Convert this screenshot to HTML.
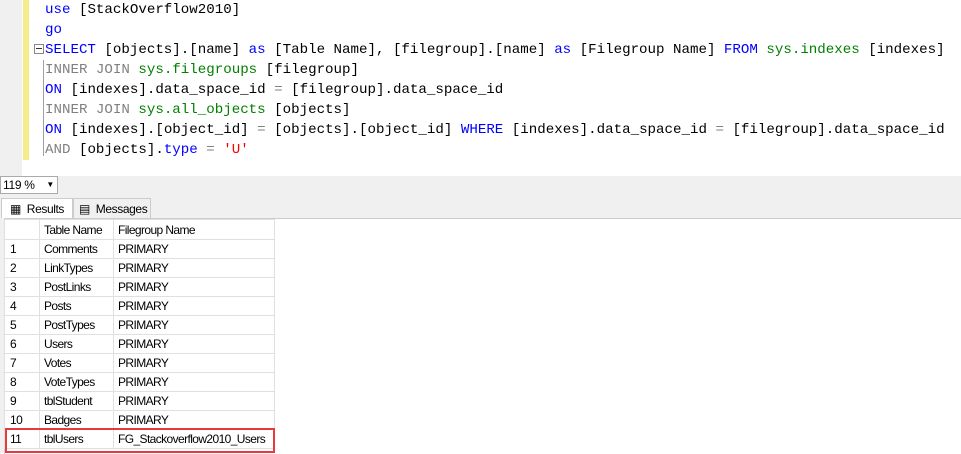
<html><head><style>
body{margin:0;width:961px;height:453px;position:relative;background:#fff;overflow:hidden;font-family:"Liberation Sans",sans-serif}
.ed{position:absolute;left:0;top:0;width:961px;height:176px;background:#fff}
.gut{position:absolute;left:0;top:0;width:22px;height:176px;background:#f0f0f0}
.yb{position:absolute;left:23px;top:0;width:6px;height:160px;background:#f5ec8a}
.code{position:absolute;left:45px;top:0;font:14.15px/20px "Liberation Mono",monospace;color:#000;white-space:pre}
.k{color:#0000ff}.g{color:#808080}.s{color:#008000}.r{color:#ff0000}
.ln{position:absolute;left:43px;top:60px;width:1px;height:96px;background:#a0a0a0}
.box{position:absolute;left:34px;top:44px;width:8px;height:8px;border:1px solid #888;background:#fff}
.box:after{content:"";position:absolute;left:1px;top:3px;width:6px;height:1px;background:#333}
.zoomb{position:absolute;left:0;top:176px;width:961px;height:19px;background:#f0f0f0}
.zsel{position:absolute;left:0;top:176px;width:58px;height:18px;background:#fff;border:1px solid #aaa;box-sizing:border-box;font-size:12px;line-height:16px;padding-left:2px;letter-spacing:-0.3px}
.res{position:absolute;left:0;top:195px;width:961px;height:258px;background:#f0f0f0}
.tab{position:absolute;top:198px;height:20px;font-size:12px;line-height:20px;box-sizing:border-box;border:1px solid #ccc;border-bottom:none;white-space:nowrap;letter-spacing:-0.4px}
.grid{position:absolute;left:4px;top:218px;width:957px;height:235px;background:#fff;border-left:1px solid #ccc;border-top:1px solid #ccc}
table{position:absolute;left:4px;top:219px;border-collapse:collapse;font-size:12px;letter-spacing:-0.6px;table-layout:fixed;width:269px}
tr{height:19px}
td{height:19px;border:1px solid #e0e0e0;padding:0 0 0 4px;white-space:nowrap;overflow:hidden}
td:nth-child(1){width:29px;padding-left:5px}td:nth-child(2){width:69px}td:nth-child(3){width:156px}
tr.h,tr.h td{height:20px}
.red{position:absolute;left:5px;top:428px;width:266px;height:21px;border:2px solid #e8393d}
</style></head><body>
<div class="ed"><div class="gut"></div><div class="yb"></div><div class="box"></div><div class="ln"></div>
<div class="code"><span class="k">use</span> [StackOverflow2010]
<span class="k">go</span>
<span class="k">SELECT</span> [objects].[name] <span class="k">as</span> [Table Name], [filegroup].[name] <span class="k">as</span> [Filegroup Name] <span class="k">FROM</span> <span class="s">sys.indexes</span> [indexes]
<span class="g">INNER JOIN</span> <span class="s">sys.filegroups</span> [filegroup]
<span class="k">ON</span> [indexes].data_space_id <span class="g">=</span> [filegroup].data_space_id
<span class="g">INNER JOIN</span> <span class="s">sys.all_objects</span> [objects]
<span class="k">ON</span> [indexes].[object_id] <span class="g">=</span> [objects].[object_id] <span class="k">WHERE</span> [indexes].data_space_id <span class="g">=</span> [filegroup].data_space_id
<span class="g">AND</span> [objects].<span class="k">type</span> <span class="g">=</span> <span class="r">'U'</span></div></div>
<div class="zoomb"></div><div class="zsel">119 % <span style="float:right;font-size:8px;margin-right:3px">▼</span></div>
<div class="res"></div>
<div class="tab" style="left:1px;width:72px;background:#fff;padding-left:8px">▦&nbsp; Results</div>
<div class="tab" style="left:73px;width:78px;background:#f0f0f0;padding-left:5px">▤&nbsp; Messages</div>
<div class="grid"></div>
<table>
<tr class="h"><td></td><td>Table Name</td><td>Filegroup Name</td></tr>
<tr><td>1</td><td style="border:1px dotted #000">Comments</td><td>PRIMARY</td></tr>
<tr><td>2</td><td>LinkTypes</td><td>PRIMARY</td></tr>
<tr><td>3</td><td>PostLinks</td><td>PRIMARY</td></tr>
<tr><td>4</td><td>Posts</td><td>PRIMARY</td></tr>
<tr><td>5</td><td>PostTypes</td><td>PRIMARY</td></tr>
<tr><td>6</td><td>Users</td><td>PRIMARY</td></tr>
<tr><td>7</td><td>Votes</td><td>PRIMARY</td></tr>
<tr><td>8</td><td>VoteTypes</td><td>PRIMARY</td></tr>
<tr><td>9</td><td>tblStudent</td><td>PRIMARY</td></tr>
<tr><td>10</td><td>Badges</td><td>PRIMARY</td></tr>
<tr><td>11</td><td>tblUsers</td><td>FG_Stackoverflow2010_Users</td></tr>
</table>
<div class="red"></div>
</body></html>
